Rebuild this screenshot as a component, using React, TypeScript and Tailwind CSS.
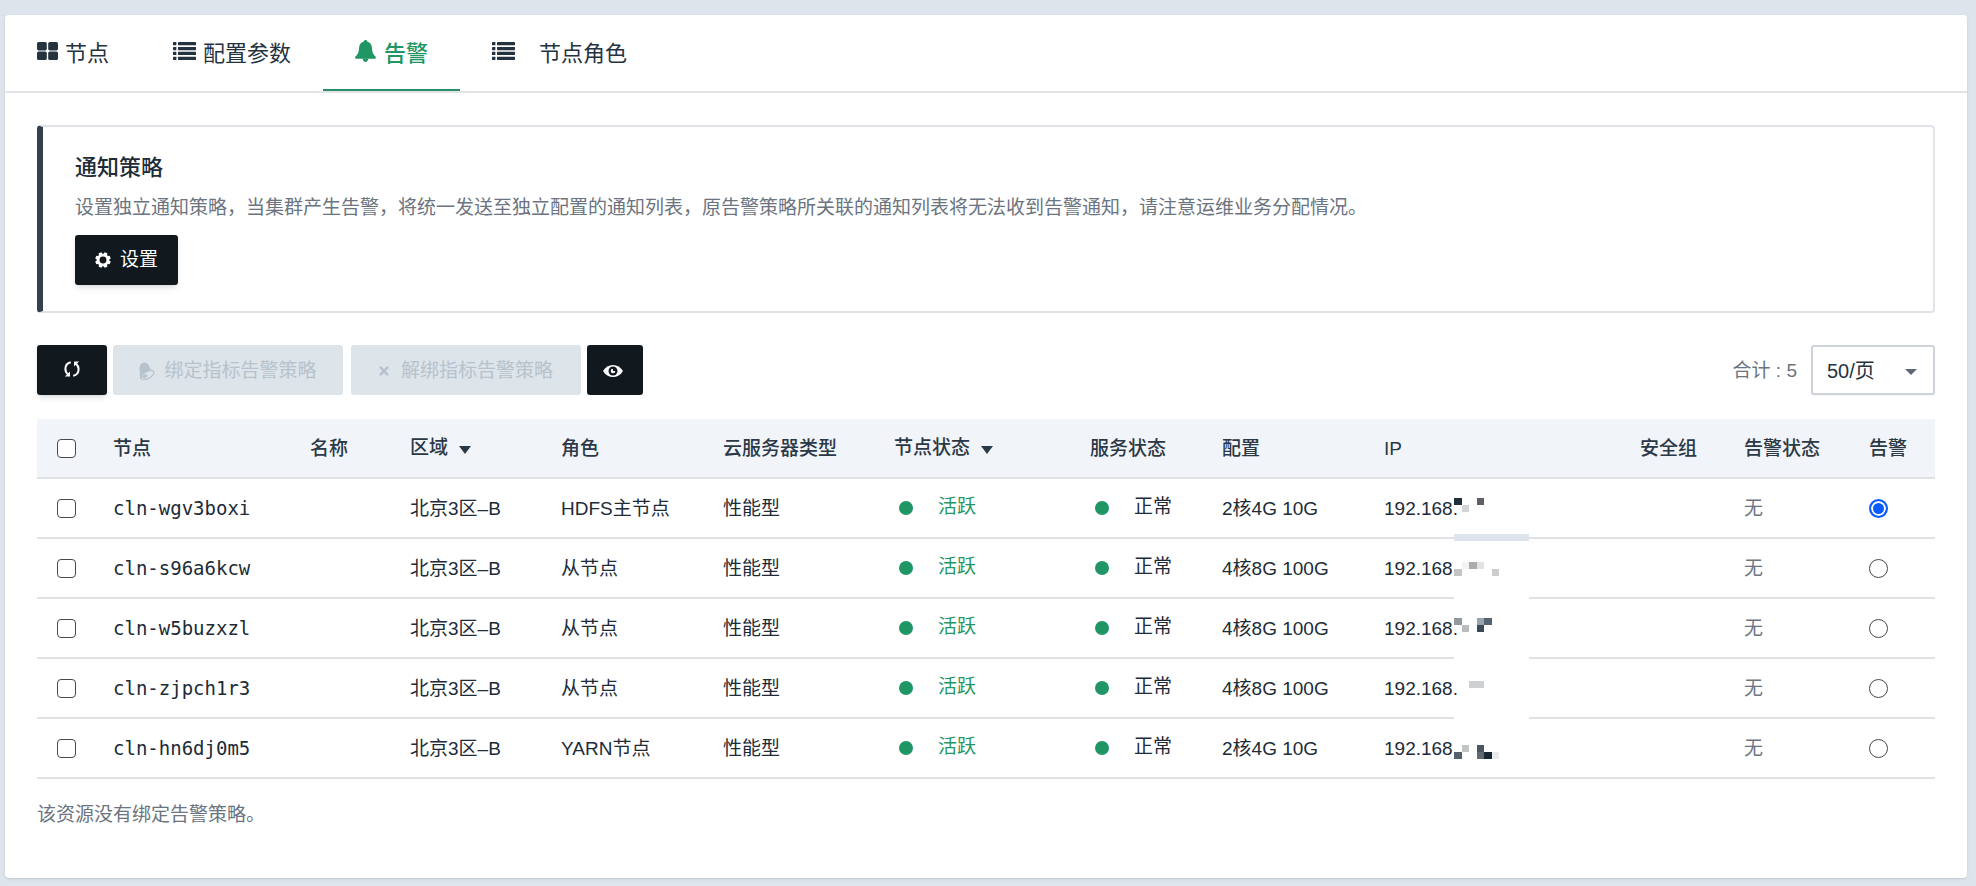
import React, { useState } from 'react';

type Block = [x: number, y: number, fill: string]

interface ClusterNode {
  id: string;
  zone: string;
  role: string;
  type: string;
  config: string;
  ip: string;
  mask: Block[];
}

const nodes: ClusterNode[] = [
  {
    id: 'cln-wgv3boxi', zone: '北京3区–B', role: 'HDFS主节点', type: '性能型', config: '2核4G 10G', ip: '192.168.',
    mask: [[0, 19, '#20303b'], [7.5, 26, '#d3d5d7'], [22.5, 19, '#5d6068']],
  },
  {
    id: 'cln-s96a6kcw', zone: '北京3区–B', role: '从节点', type: '性能型', config: '4核8G 100G', ip: '192.168.',
    mask: [[7.5, 23, '#f3f3f5'], [15, 23, '#a9abad'], [22.5, 23, '#e1e2e4'], [0, 30, '#c3c4c4'], [37.5, 30, '#cccdce']],
  },
  {
    id: 'cln-w5buzxzl', zone: '北京3区–B', role: '从节点', type: '性能型', config: '4核8G 100G', ip: '192.168.',
    mask: [[0, 19, '#94999e'], [22.5, 19, '#98a4ac'], [30, 19, '#556370'], [7.5, 26, '#b9bdc0'], [22.5, 26, '#3b4856']],
  },
  {
    id: 'cln-zjpch1r3', zone: '北京3区–B', role: '从节点', type: '性能型', config: '4核8G 100G', ip: '192.168.',
    mask: [[15, 22, '#cfd0d2'], [22.5, 22, '#cfd0d2']],
  },
  {
    id: 'cln-hn6dj0m5', zone: '北京3区–B', role: 'YARN节点', type: '性能型', config: '2核4G 10G', ip: '192.168.',
    mask: [[7.5, 26, '#c0c4c4'], [22.5, 26, '#4c5663'], [0, 33, '#56606c'], [22.5, 33, '#606873'], [30, 33, '#1b2635'], [37.5, 33, '#e9eaea']],
  },
];

const GridIcon = () => (
  <svg width="21" height="18" viewBox="0 0 21 18" fill="currentColor" aria-hidden="true">
    <rect x="0" y="0" width="9.8" height="8.4" rx="1.6" />
    <rect x="11.2" y="0" width="9.8" height="8.4" rx="1.6" />
    <rect x="0" y="9.6" width="9.8" height="8.4" rx="1.6" />
    <rect x="11.2" y="9.6" width="9.8" height="8.4" rx="1.6" />
  </svg>
)

const ListIcon = () => (
  <svg width="23" height="18" viewBox="0 0 23 18" fill="currentColor" aria-hidden="true">
    {[0, 4.9, 9.8, 14.7].map((y) => (
      <g key={y}>
        <rect x="0" y={y} width="3.4" height="3.3" rx="0.6" />
        <rect x="5" y={y} width="18" height="3.3" rx="0.4" />
      </g>
    ))}
  </svg>
)

const BellIcon = () => (
  <svg width="21" height="22" viewBox="0 0 21 22" fill="currentColor" aria-hidden="true">
    <path d="M10.5 0c1 0 1.600.6 1.700 1.500 3 .8 4.600 3.200 4.800 6.700.2 4.200 1.200 6.400 3.500 8.300.6.6.5 2.200-.5 2.200H1c-1 0-1.100-1.600-.5-2.200C2.800 14.600 3.800 12.400 4 8.200c.2-3.500 1.800-5.900 4.800-6.700C8.900.6 9.500 0 10.500 0z" />
    <path d="M7.600 18.500h5.800c-.3 2.300-1.400 3.500-2.900 3.500s-2.600-1.200-2.900-3.500z" />
  </svg>
)

const GearIcon = () => (
  <svg width="16" height="16" viewBox="0 0 16 16" fill="currentColor" aria-hidden="true">
    {[0, 45, 90, 135, 180, 225, 270, 315].map((deg) => (
      <path key={deg} d="M5.900 3.200 6.500.2h3l.6 3z" transform={`rotate(${deg + 22.5} 8 8)`} />
    ))}
    <circle cx="8" cy="8" r="4.900" fill="none" stroke="currentColor" strokeWidth="2.900" />
  </svg>
)

const RefreshIcon = () => (
  <svg width="16" height="16" viewBox="0 0 16 16" fill="none" stroke="currentColor" strokeWidth="2" aria-hidden="true">
    <path d="M6.800 1.200C3.600 1.800 1.400 4.600 1.400 8c0 2.400 1.100 4.200 2.800 5.600" />
    <path d="M9.200 14.800c3.200-.6 5.400-3.400 5.400-6.800 0-2.400-1.100-4.200-2.800-5.600" />
    <path d="M6 10.400v5.100H.9z" fill="currentColor" stroke="none" />
    <path d="M10 5.600V.5h5.100z" fill="currentColor" stroke="none" />
  </svg>
)

const BindIcon = () => (
  <svg width="16" height="18" viewBox="0 0 16 18" fill="currentColor" aria-hidden="true">
    <path d="M1.300 3C2.600.6 5.600-.2 7.900 1.300c1.900 1.300 2.600 3.200 3.200 5.200.4 1.300 1.900 1.900 4.200 2.900L1.200 16.800C.4 14 1.200 12.300.8 10.200.4 7.600.2 5.200 1.300 3z" />
    <ellipse cx="8.500" cy="13" rx="7" ry="3.500" transform="rotate(-30 8.500 13)" fill="#dde4ea" stroke="currentColor" strokeWidth="1.100" />
    <path d="M3.200 15.400c.4-2 2.400-3.400 4.600-3 .8 1.300.3 2.600-1.300 3.300-1.300.6-2.600.6-3.300-.3z" />
  </svg>
)

const CrossIcon = () => (
  <svg width="10" height="10" viewBox="0 0 10 10" fill="none" stroke="currentColor" strokeWidth="2.400" aria-hidden="true">
    <path d="M1 .8l8 8.400M9 .8L1 9.200" />
  </svg>
)

const EyeIcon = () => (
  <svg width="20" height="12" viewBox="0 0 20 12" aria-hidden="true">
    <path d="M0 6C2.400 2 5.900 0 10 0s7.600 2 10 6c-2.400 4-5.900 6-10 6S2.400 10 0 6z" fill="#fff" />
    <circle cx="10" cy="6" r="4.500" fill="#11191f" />
    <circle cx="10" cy="6" r="2.300" fill="#fff" />
    <path d="M10 6V2.800A3.200 3.200 0 0 1 13 6z" fill="#11191f" />
  </svg>
)

const Caret = () => (
  <svg width="12" height="8" viewBox="0 0 12 8" fill="currentColor" aria-hidden="true">
    <path d="M0 0h12L6 8z" />
  </svg>
)

const SortHeader = ({ children }: any) => (
  <button type="button" className="flex items-center gap-[11px] pb-0.5 font-medium whitespace-nowrap">
    {children}
    <span className="pt-1"><Caret /></span>
  </button>
)

const Status = ({ label, className }: any) => (
  <div className="flex items-center gap-[25px] pl-[5px]">
    <span className="size-[14px] shrink-0 rounded-full bg-[#1f9664]" />
    <span className={`pb-0.5 whitespace-nowrap ${className}`}>{label}</span>
  </div>
)

const IpMask = ({ blocks, row }: { blocks: Block[]; row: number }) => (
  <svg className="absolute top-0 left-[90px]" width="75" height="62" viewBox="0 0 75 62" shapeRendering="crispEdges" aria-hidden="true">
    {row === 0 && <rect x="0" y="55" width="75" height="7" fill="#dde4eb" />}
    {row > 0 && row < 4 && <rect x="0" y="56" width="75" height="6" fill="#fff" />}
    {blocks.map(([x, y, fill]) => (
      <rect key={`${x}-${y}`} x={x} y={y} width="7.500" height="7" fill={fill} />
    ))}
  </svg>
)

const checkboxClass = 'block size-[19px] appearance-none rounded-[4px] border border-[#48494c] bg-white checked:bg-[#0b5cff]'
const radioClass = 'block size-[19px] appearance-none rounded-full border border-[#48494c] bg-white checked:border-2 checked:border-[#0b5cff] checked:bg-[#0b5cff] checked:shadow-[inset_0_0_0_2px_#fff]'
const thClass = 'h-[60px] border-b-2 border-[#e0e2e5] bg-[#f1f4f8] pt-0.5 pl-5 text-left font-medium whitespace-nowrap'
const tdClass = 'h-[60px] border-b-2 border-[#e0e2e5] pt-0.5 pl-5 whitespace-nowrap'
const controlCell = 'h-[60px] border-b-2 border-[#e0e2e5] pl-5'
const tabClass = 'flex items-center border-y-2 border-transparent px-8 [&>svg]:mb-1'

const Tabs = () => (
  <nav className="flex h-[78px] border-b-2 border-[#e0e4e6] text-[22px] text-[#253341]">
    <a href="#nodes" className={`${tabClass} gap-[7px]`}>
      <GridIcon />
      节点
    </a>
    <a href="#config" className={`${tabClass} gap-[7px]`}>
      <ListIcon />
      配置参数
    </a>
    <a href="#alarm" className="flex items-center gap-2 border-y-2 border-t-transparent border-b-[#2a8f69] px-8 font-medium text-[#1f9664] [&>svg]:mb-1">
      <BellIcon />
      告警
    </a>
    <a href="#roles" className={`${tabClass} gap-6`}>
      <ListIcon />
      节点角色
    </a>
  </nav>
)

const PolicyCard = () => (
  <section className="rounded-[4px] border-2 border-l-[6px] border-[#e0e4e8] border-l-[#33414f] px-8 pt-[25px] pb-[26px]">
    <h2 className="text-[22px] leading-8 font-medium text-[#202b38]">通知策略</h2>
    <p className="mt-2 text-[19px] leading-8 text-[#6b7480]">
      设置独立通知策略，当集群产生告警，将统一发送至独立配置的通知列表，原告警策略所关联的通知列表将无法收到告警通知，请注意运维业务分配情况。
    </p>
    <button type="button" className="mt-[11px] flex h-[50px] items-center gap-[9px] rounded-[3px] bg-[#11191f] px-5 text-[19px] text-white shadow-md">
      <GearIcon />
      设置
    </button>
  </section>
)

const Toolbar = () => (
  <div className="flex items-center justify-between">
    <div className="flex h-[50px] text-[19px]">
      <button type="button" aria-label="刷新" className="flex w-[70px] items-center justify-center rounded-[3px] bg-[#11191f] pb-0.5 text-white shadow-md">
        <RefreshIcon />
      </button>
      <button type="button" disabled className="ml-1.5 flex w-[230px] items-center justify-center gap-[9px] rounded-[3px] bg-[#dde4ea] pt-0.5 text-[#b7c2cc]">
        <BindIcon />
        绑定指标告警策略
      </button>
      <button type="button" disabled className="ml-2 flex w-[230px] items-center justify-center gap-3 rounded-[3px] bg-[#dde4ea] pt-0.5 text-[#b7c2cc]">
        <CrossIcon />
        解绑指标告警策略
      </button>
      <button type="button" aria-label="显示列" className="ml-1.5 flex w-14 items-center justify-center rounded-[3px] bg-[#11191f] pt-0.5 pr-1">
        <EyeIcon />
      </button>
    </div>
    <div className="flex items-center gap-3.5">
      <label htmlFor="page-size" className="pt-0.5 text-[19px] text-[#6b7480]">合计 : 5</label>
      <div className="relative">
        <select id="page-size" className="h-[50px] w-[124px] appearance-none rounded-[3px] border-2 border-[#ced2dc] bg-white pt-0.5 pl-3.5 text-[20px] text-[#253341] shadow-xs">
          <option>50/页</option>
          <option>100/页</option>
        </select>
        <svg className="pointer-events-none absolute top-6 right-[18px] text-[#5f6874]" width="12" height="6" viewBox="0 0 12 6" fill="currentColor" aria-hidden="true">
          <path d="M0 0h12L6 6z" />
        </svg>
      </div>
    </div>
  </div>
)

const NodeTable = () => {
  const [selected, setSelected] = useState(nodes[0].id)

  return (
    <table className="w-full table-fixed border-separate border-spacing-0 text-[19px] text-[#202b38]">
      <colgroup>
        <col className="w-[56px]" />
        <col className="w-[197px]" />
        <col className="w-[100px]" />
        <col className="w-[151px]" />
        <col className="w-[162px]" />
        <col className="w-[171px]" />
        <col className="w-[196px]" />
        <col className="w-[132px]" />
        <col className="w-[162px]" />
        <col />
        <col className="w-[104px]" />
        <col className="w-[125px]" />
        <col className="w-[86px]" />
      </colgroup>
      <thead className="text-[#2b3846]">
        <tr>
          <th className={`${controlCell} bg-[#f1f4f8]`}><input type="checkbox" aria-label="全选" className={checkboxClass} /></th>
          <th className={thClass}>节点</th>
          <th className={thClass}>名称</th>
          <th className={thClass}><SortHeader>区域</SortHeader></th>
          <th className={thClass}>角色</th>
          <th className={thClass}>云服务器类型</th>
          <th className={thClass}><SortHeader>节点状态</SortHeader></th>
          <th className={thClass}>服务状态</th>
          <th className={thClass}>配置</th>
          <th className={thClass}>IP</th>
          <th className={thClass}>安全组</th>
          <th className={thClass}>告警状态</th>
          <th className={thClass}>告警</th>
        </tr>
      </thead>
      <tbody>
        {nodes.map((node, i) => (
          <tr key={node.id}>
            <td className={controlCell}><input type="checkbox" aria-label={node.id} className={checkboxClass} /></td>
            <td className={`${controlCell} font-['DejaVu_Sans_Mono',monospace]`}>{node.id}</td>
            <td className={tdClass}></td>
            <td className={tdClass}>{node.zone}</td>
            <td className={tdClass}>{node.role}</td>
            <td className={tdClass}>{node.type}</td>
            <td className={controlCell}><Status label="活跃" className="text-[#1f9664]" /></td>
            <td className={controlCell}><Status label="正常" className="text-[#202b38]" /></td>
            <td className={tdClass}>{node.config}</td>
            <td className={`${tdClass} relative`}>
              {node.ip}
              <IpMask blocks={node.mask} row={i} />
            </td>
            <td className={tdClass}></td>
            <td className={`${tdClass} text-[#6b7480]`}>无</td>
            <td className={controlCell}>
              <input
                type="radio"
                name="alarm-node"
                aria-label={`${node.id} 告警`}
                className={radioClass}
                checked={selected === node.id}
                onChange={() => setSelected(node.id)}
              />
            </td>
          </tr>
        ))}
      </tbody>
    </table>
  )
}

export default function App() {
  return (
    <div className="flex min-h-screen flex-col bg-[#dde4eb] pt-[15px] pr-[9px] pb-2 pl-[5px] font-['Liberation_Sans','Noto_Sans_CJK_SC',sans-serif]">
      <main className="flex-1 rounded-[4px] bg-white shadow-sm">
        <Tabs />
        <div className="flex flex-col px-8 pt-8">
          <PolicyCard />
          <div className="mt-8">
            <Toolbar />
          </div>
          <div className="mt-6">
            <NodeTable />
          </div>
          <p className="mt-5 text-[19px] leading-8 text-[#6b7480]">该资源没有绑定告警策略。</p>
        </div>
      </main>
    </div>
  )
}
